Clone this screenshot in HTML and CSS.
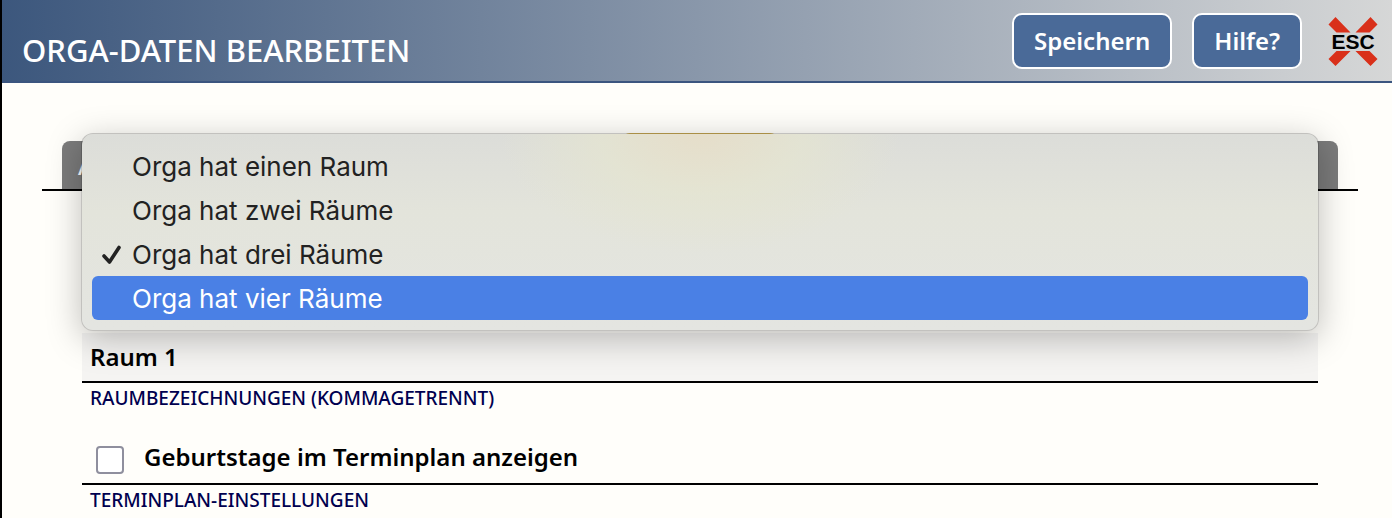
FILE: index.html
```html
<!DOCTYPE html>
<html lang="de">
<head>
  <meta charset="UTF-8">
  <meta name="viewport" content="width=device-width, initial-scale=1.0">
  <title>Orga-Daten bearbeiten</title>
  <link rel="stylesheet" href="styles.css">
</head>
<body>
  <header>
    <h1>ORGA-DATEN BEARBEITEN</h1>
    <div class="actions">
      <button type="submit" form="orga-form" class="btn">Speichern</button>
      <button type="button" class="btn">Hilfe?</button>
      <button type="button" class="esc" aria-label="Schließen">
        <svg width="50" height="50" viewBox="0 0 50 50">
          <path d="M7.500 1 L22.500 16.500 H8.500 L0.500 8.500 Z M42.500 1 L49.500 8.500 L41.500 16.500 H27.500 Z M8.500 35 H22.500 L7.500 50 L0.500 43 Z M27.500 35 H41.500 L49.500 43 L42.500 50 Z" fill="#d9301a"/>
        </svg>
        <span>ESC</span>
      </button>
    </div>
  </header>

  <main>
    <nav class="tabs">
      <button type="button" class="tab">A</button>
      <button type="button" class="tab active" aria-label="Räume"></button>
      <button type="button" class="tab" aria-label="Weitere"></button>
    </nav>

    <form id="orga-form">
      <!-- Number of rooms, list is open -->
      <div class="field">
        <select class="control" aria-label="Räume">
          <option>Orga hat einen Raum</option>
          <option>Orga hat zwei Räume</option>
          <option selected>Orga hat drei Räume</option>
          <option>Orga hat vier Räume</option>
        </select>
        <ul class="menu" role="listbox">
          <li role="option">Orga hat einen Raum</li>
          <li role="option">Orga hat zwei Räume</li>
          <li role="option" aria-selected="true">
            <svg class="check" width="20" height="20" viewBox="0 0 20 20">
              <path d="M2 11 L7.500 17 L17 2.500" fill="none" stroke="#222" stroke-width="3.600" stroke-linecap="round" stroke-linejoin="round"/>
            </svg>
            Orga hat drei Räume
          </li>
          <li role="option" class="highlight">Orga hat vier Räume</li>
        </ul>
      </div>

      <div class="field">
        <input type="text" class="control" id="rooms" value="Raum 1">
        <label class="caption" for="rooms">RAUMBEZEICHNUNGEN (KOMMAGETRENNT)</label>
      </div>

      <div class="field">
        <label class="control check-row">
          <input type="checkbox">
          <span>Geburtstage im Terminplan anzeigen</span>
        </label>
        <div class="caption">TERMINPLAN-EINSTELLUNGEN</div>
      </div>
    </form>
  </main>
</body>
</html>
```

FILE: styles.css
```css
* {
  margin: 0;
  padding: 0;
  box-sizing: border-box;
}

body {
  min-height: 100vh;
  border-left: 2px solid #000;
  background-color: #fffefa;
  color: #000;
  font-family: "Noto Sans", sans-serif;
  font-weight: 500;
  overflow: hidden;
}

button,
input,
select {
  font: inherit;
  color: inherit;
}

/* Header */
header {
  display: flex;
  justify-content: space-between;
  align-items: center;
  height: 83px;
  padding: 0 14px 0 20px;
  border-bottom: 2px solid #3b557f;
  background: linear-gradient(to right, #3c577d, #d6d7d7);
}

header h1 {
  padding-top: 18px;
  color: #fff;
  font-size: 31px;
  font-weight: 500;
  line-height: 40px;
}

.actions {
  display: flex;
  align-items: center;
  gap: 20px;
}

.btn {
  height: 56px;
  padding: 0 20px;
  border: 2px solid #fff;
  border-radius: 10px;
  background-color: #4a6a98;
  color: #fff;
  font-size: 24px;
  font-weight: 600;
}

.esc {
  position: relative;
  width: 50px;
  height: 50px;
  margin-left: 6px;
  border: none;
  background: none;
}

.esc svg {
  display: block;
}

.esc span {
  position: absolute;
  inset: 0;
  color: #000;
  font-family: "Liberation Sans", sans-serif;
  font-size: 21px;
  font-weight: bold;
  line-height: 52px;
}

/* Tabs */
main {
  padding: 50px 34px 0 40px;
}

.tabs {
  display: flex;
  align-items: flex-end;
  height: 58px;
  padding: 0 20px;
  border-bottom: 2px solid #000;
}

.tab {
  flex: 1;
  height: 48px;
  padding: 0 16px;
  border: none;
  border-radius: 8px 8px 0 0;
  background-color: #7b7b7b;
  color: #fff;
  font-size: 24px;
  text-align: left;
}

.tab.active {
  flex: 0 0 156px;
  height: 56px;
  background-color: #e0bd5c;
}

/* Form */
form {
  padding: 40px 40px 0;
}

.field {
  position: relative;
  height: 102px;
}

.control {
  display: block;
  width: 100%;
  height: 50px;
  padding: 0 8px 2px;
  border: none;
  border-bottom: 2px solid #000;
  border-radius: 0;
  background-color: #f5f4f2;
  font-size: 24px;
}

.caption {
  display: block;
  padding: 0 8px;
  color: #00004f;
  font-size: 19px;
  line-height: 30px;
}

.check-row {
  display: flex;
  align-items: flex-start;
  gap: 20px;
  padding: 0 14px;
  background: none;
  font-size: 24px;
  line-height: 44px;
}

.check-row input {
  width: 28px;
  height: 28px;
  margin-top: 11px;
  border: 2px solid #8f8f9d;
  border-radius: 4px;
  background-color: #fff;
  appearance: none;
}

.check-row span,
input.control {
  font-weight: 600;
}

/* Open drop-down list */
.menu {
  position: absolute;
  top: -98px;
  left: -1px;
  right: -1px;
  z-index: 10;
  padding: 10px;
  border: 1px solid rgba(0, 0, 0, 0.24);
  border-radius: 12px;
  background:
    radial-gradient(ellipse 200px 120px at 50% 0, rgba(232, 222, 198, 0.8), rgba(229, 229, 208, 0.7) 50%, transparent),
    linear-gradient(#dcddd9, #e3e4db 40%, #e4e5e1);
  background-clip: padding-box;
  box-shadow: 0 8px 34px rgba(0, 0, 0, 0.26);
  color: #222;
  font-family: Inter, sans-serif;
  font-size: 26px;
  font-weight: 400;
  list-style: none;
}

.menu li {
  position: relative;
  height: 44px;
  padding-left: 40px;
  border-radius: 6px;
  line-height: 46px;
}

.menu .highlight {
  background-color: #4a80e5;
  color: #fff;
}

.menu .check {
  position: absolute;
  top: 13px;
  left: 10px;
}
```
